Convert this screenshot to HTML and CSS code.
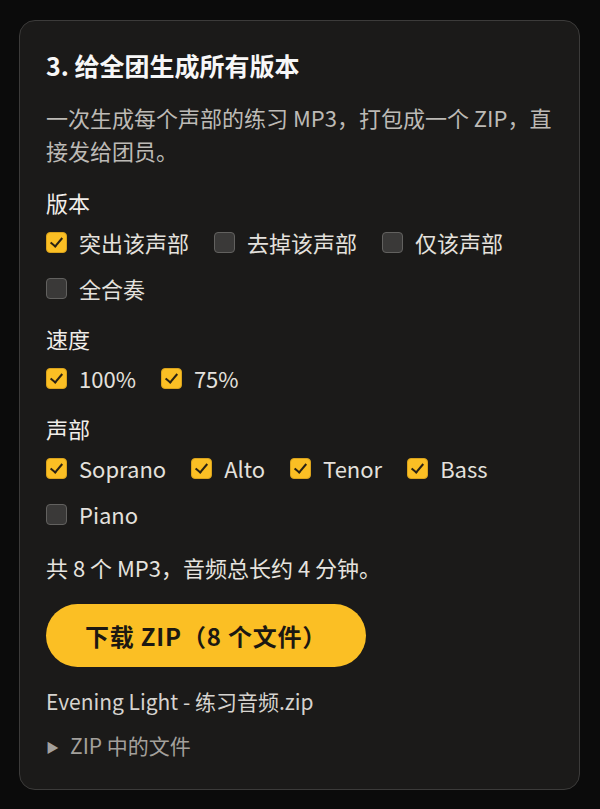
FILE: index.html
```html
<!DOCTYPE html>
<html lang="zh-CN">
<head>
  <meta charset="UTF-8" />
  <meta name="viewport" content="width=device-width, initial-scale=1.0"/>
  <title>练习音频 | 批量生成</title>
  <link rel="stylesheet" href="styles.css">
</head>
<body>

  <!-- Step 3: batch export for the whole choir -->
  <section class="panel">
    <h2>3. 给全团生成所有版本</h2>
    <p class="desc">一次生成每个声部的练习 MP3，打包成一个 ZIP，直接发给团员。</p>

    <div class="group">
      <div class="group-label">版本</div>
      <div class="options">
        <label class="opt"><input type="checkbox" checked> 突出该声部</label>
        <label class="opt"><input type="checkbox"> 去掉该声部</label>
        <label class="opt"><input type="checkbox"> 仅该声部</label>
        <label class="opt"><input type="checkbox"> 全合奏</label>
      </div>
    </div>

    <div class="group">
      <div class="group-label">速度</div>
      <div class="options">
        <label class="opt"><input type="checkbox" checked> 100%</label>
        <label class="opt"><input type="checkbox" checked> 75%</label>
      </div>
    </div>

    <div class="group">
      <div class="group-label">声部</div>
      <div class="options">
        <label class="opt"><input type="checkbox" checked> Soprano</label>
        <label class="opt"><input type="checkbox" checked> Alto</label>
        <label class="opt"><input type="checkbox" checked> Tenor</label>
        <label class="opt"><input type="checkbox" checked> Bass</label>
        <label class="opt"><input type="checkbox"> Piano</label>
      </div>
    </div>

    <p class="summary">共 8 个 MP3，音频总长约 4 分钟。</p>

    <button type="button" class="download-btn">下载 ZIP（8 个文件）</button>

    <div class="filename">Evening Light - 练习音频.zip</div>

    <details class="zip-list">
      <summary>ZIP 中的文件</summary>
    </details>
  </section>

</body>
</html>
```

FILE: styles.css
```css
body {
  margin: 0;
  padding: 20px 20px 20px 19px;
  background: #0b0b0b;
  font-family: 'Noto Sans CJK SC', 'Noto Sans', sans-serif;
  color: #e6e6e6;
}

.panel {
  display: flex;
  flex-direction: column;
  align-items: flex-start;
  background: #1b1a19;
  border: 1px solid #3c3b3a;
  border-radius: 16px;
  padding: 27px 26px 26px;
  box-sizing: border-box;
  height: 770px;
}

.panel h2 {
  margin: 0;
  font-size: 25px;
  line-height: 34px;
  font-weight: 700;
  color: #f7f7f7;
}

.desc {
  margin: 19px 0 0;
  font-size: 22px;
  line-height: 33px;
  color: #bdbab6;
}

.group {
  margin-top: 20px;
}

.group-label {
  font-size: 22px;
  line-height: 30px;
  color: #f0ede9;
}

.options {
  display: flex;
  flex-wrap: wrap;
  column-gap: 25px;
  row-gap: 16px;
  margin-top: 10px;
}

.opt {
  display: flex;
  align-items: center;
  gap: 12px;
  font-size: 22px;
  line-height: 30px;
  color: #e4e1dd;
  cursor: pointer;
}

.opt input {
  appearance: none;
  -webkit-appearance: none;
  position: relative;
  margin: 0;
  width: 21px;
  height: 21px;
  border: 1.5px solid #62615f;
  border-radius: 4px;
  background: #3a3938;
  box-sizing: border-box;
  cursor: pointer;
}

.opt input:checked {
  background: #fbbf24;
  border-color: #d9a21c;
}

.opt input:checked::after {
  content: "";
  position: absolute;
  left: 6px;
  top: 2px;
  width: 5px;
  height: 10px;
  border-right: 2.5px solid #2a2214;
  border-bottom: 2.5px solid #2a2214;
  transform: rotate(40deg);
}

.summary {
  margin: 23px 0 0;
  font-size: 22px;
  line-height: 30px;
  color: #e6e3df;
}

.download-btn {
  margin-top: 22px;
  height: 63px;
  padding: 0 39px;
  border: none;
  border-radius: 32px;
  background: #fbbf24;
  color: #1c1812;
  font-family: inherit;
  font-size: 24px;
  font-weight: 700;
  letter-spacing: 0.8px;
  cursor: pointer;
}

.download-btn:hover {
  background: #fcc940;
}

.filename {
  margin-top: 19px;
  font-size: 21px;
  line-height: 30px;
  color: #d6d3cf;
}

.zip-list {
  margin-top: 14px;
  font-size: 21px;
  line-height: 30px;
  color: #a3a09c;
}

.zip-list summary {
  list-style: none;
  cursor: pointer;
}

.zip-list summary::-webkit-details-marker {
  display: none;
}

.zip-list summary::before {
  content: "▶";
  display: inline-block;
  font-size: 13px;
  margin-right: 11px;
  vertical-align: 2px;
}

.zip-list[open] summary::before {
  content: "▼";
}
```
